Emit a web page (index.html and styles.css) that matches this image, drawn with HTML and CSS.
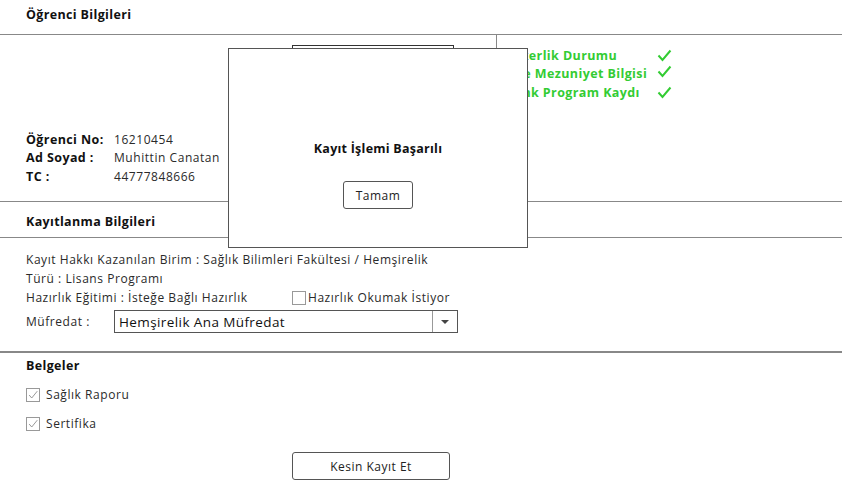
FILE: index.html
```html
<!DOCTYPE html>
<html lang="tr">
<head>
<meta charset="utf-8">
<title>Öğrenci Kayıt</title>
<link rel="stylesheet" href="styles.css">
</head>
<body>
<div class="page">
  <div class="section-head">Öğrenci Bilgileri</div>
  <div class="student">
    <div class="student-left">
      <div class="info">
        <div class="info-row"><span class="info-label">Öğrenci No:</span><span>16210454</span></div>
        <div class="info-row"><span class="info-label">Ad Soyad :</span><span>Muhittin Canatan</span></div>
        <div class="info-row"><span class="info-label">TC :</span><span>44777848666</span></div>
      </div>
      <div class="photo"></div>
    </div>
    <div class="student-right">
      <div class="status-row"><span class="status-text">Askerlik Durumu</span><svg class="check" viewBox="0 0 15 13"><path d="M1.5 6.5 L5.5 11 L13.5 1.5"/></svg></div>
      <div class="status-row"><span class="status-text">Lise Mezuniyet Bilgisi</span><svg class="check check-up" viewBox="0 0 15 13"><path d="M1.5 6.5 L5.5 11 L13.5 1.5"/></svg></div>
      <div class="status-row"><span class="status-text">Denk Program Kaydı</span><svg class="check" viewBox="0 0 15 13"><path d="M1.5 6.5 L5.5 11 L13.5 1.5"/></svg></div>
    </div>
  </div>

  <div class="section-head section-head-2">Kayıtlanma Bilgileri</div>
  <div class="enroll">
    <div class="line">Kayıt Hakkı Kazanılan Birim : Sağlık Bilimleri Fakültesi / Hemşirelik</div>
    <div class="line">Türü : Lisans Programı</div>
    <div class="line prep">
      <span class="prep-label">Hazırlık Eğitimi : İsteğe Bağlı Hazırlık</span>
      <span class="box"></span><span>Hazırlık Okumak İstiyor</span>
    </div>
    <div class="curr">
      <span class="curr-label">Müfredat :</span>
      <div class="select">
        <span class="select-text">Hemşirelik Ana Müfredat</span>
        <span class="select-btn"><svg viewBox="0 0 8 4" class="arrow"><path d="M0 0 H8 L4 4 Z"/></svg></span>
      </div>
    </div>
  </div>

  <div class="docs">
    <div class="docs-head">Belgeler</div>
    <div class="doc-row"><span class="box box-checked"><svg viewBox="0 0 14 14"><path d="M2.5 7 L5.5 10.5 L12 2.5"/></svg></span><span>Sağlık Raporu</span></div>
    <div class="doc-row"><span class="box box-checked"><svg viewBox="0 0 14 14"><path d="M2.5 7 L5.5 10.5 L12 2.5"/></svg></span><span>Sertifika</span></div>
    <div class="submit-wrap"><button class="btn btn-submit">Kesin Kayıt Et</button></div>
  </div>

  <div class="dialog">
    <div class="dialog-title">Kayıt İşlemi Başarılı</div>
    <button class="btn btn-ok">Tamam</button>
  </div>
</div>
</body>
</html>
```

FILE: styles.css
```css
* { box-sizing: border-box; }
html, body { margin: 0; padding: 0; background: #fff; }
body {
  font-family: "Open Sans", "Noto Sans", sans-serif;
  font-size: 12px;
  letter-spacing: 0.55px;
  color: #2a2a2a;
  width: 842px;
  height: 503px;
  overflow: hidden;
}
.page { position: relative; width: 842px; height: 503px; }

.section-head {
  height: 35px;
  padding: 6px 0 0 26px;
  line-height: 18px;
  font-weight: 700;
  font-size: 12.5px;
  letter-spacing: 0.35px;
  color: #111;
  border-bottom: 1px solid #888;
}
.section-head-2 { height: 36px; padding-top: 11px; }

.student {
  display: flex;
  height: 167px;
  border-bottom: 1px solid #888;
}
.student-left {
  width: 497px;
  border-right: 1px solid #888;
  display: flex;
  padding-left: 26px;
}
.info {
  width: 266px;
  align-self: flex-end;
  padding-bottom: 15px;
}
.info-row { display: flex; line-height: 18.5px; }
.info-label {
  width: 88px;
  font-weight: 700;
  font-size: 12.5px;
  letter-spacing: 0.4px;
  color: #111;
}
.photo {
  margin-top: 10px;
  width: 162px;
  height: 140px;
  border: 1px solid #333;
}
.student-right {
  padding: 11px 0 0 8px;
}
.status-row {
  display: flex;
  align-items: center;
  height: 18.5px;
}
.status-text {
  width: 152px;
  color: #33cc33;
  font-weight: 700;
  font-size: 12.5px;
  letter-spacing: 0.4px;
  white-space: nowrap;
}
.check {
  width: 15px;
  height: 13px;
  fill: none;
  stroke: #33cc33;
  stroke-width: 2;
}
.check-up { position: relative; top: -2px; }

.enroll {
  padding: 12px 0 18px 26px;
  border-bottom: 2px solid #888;
}
.line { line-height: 19px; display: flex; align-items: center; white-space: nowrap; }
.prep-label { width: 266px; }
.box {
  width: 14px;
  height: 14px;
  border: 1px solid #999;
  margin-right: 2px;
  flex: none;
}
.curr { display: flex; align-items: center; margin-top: 3px; }
.curr-label { width: 88px; }
.select {
  width: 344px;
  height: 23px;
  border: 1px solid #555;
  display: flex;
  align-items: center;
}
.select-text {
  flex: 1;
  padding-left: 4px;
  font-size: 13.5px;
  letter-spacing: 0.4px;
  color: #111;
}
.select-btn {
  width: 25px;
  height: 21px;
  border-left: 1px solid #999;
  display: flex;
  align-items: center;
  justify-content: center;
}
.arrow { width: 8px; height: 4px; fill: #444; }

.docs { padding: 4px 0 0 26px; }
.docs-head {
  line-height: 18px;
  font-weight: 700;
  font-size: 12.5px;
  letter-spacing: 0.35px;
  color: #111;
}
.doc-row {
  display: flex;
  align-items: center;
  height: 29px;
}
.docs-head + .doc-row { margin-top: 5px; }
.box-checked { margin-right: 6px; display: flex; }
.box-checked svg { width: 12px; height: 12px; fill: none; stroke: #888; stroke-width: 1; }
.submit-wrap { padding: 14px 0 0 266px; }

.btn {
  font-family: inherit;
  font-size: 12px;
  letter-spacing: 0.5px;
  color: #222;
  background: #fff;
  border: 1px solid #555;
  border-radius: 3px;
  padding: 0;
}
.btn-submit { width: 158px; height: 28px; }

.dialog {
  position: absolute;
  left: 228px;
  top: 48px;
  width: 300px;
  height: 200px;
  border: 1px solid #555;
  background: #fff;
  display: flex;
  flex-direction: column;
  align-items: center;
}
.dialog-title {
  margin-top: 91px;
  line-height: 18px;
  font-weight: 700;
  font-size: 12.5px;
  letter-spacing: 0.25px;
  color: #111;
}
.btn-ok { margin-top: 23px; width: 70px; height: 28px; }
```
